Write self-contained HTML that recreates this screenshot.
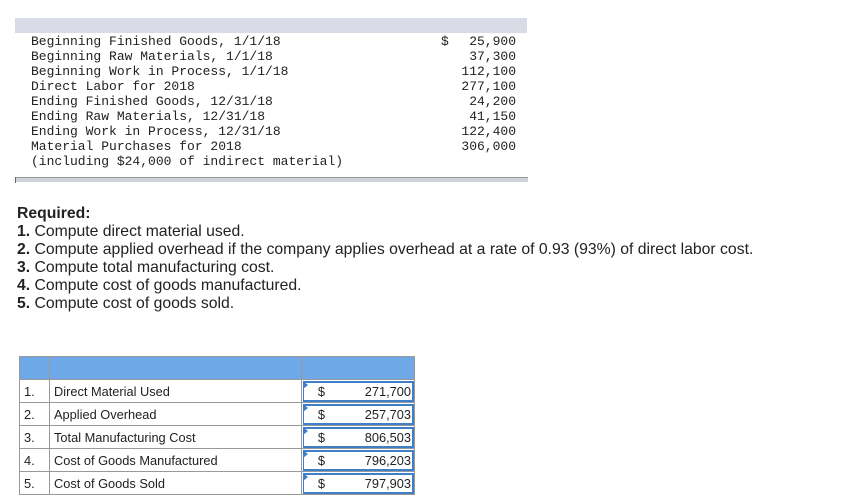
<!DOCTYPE html>
<html><head><style>
body{margin:0;width:844px;height:497px;background:#fff;position:relative;overflow:hidden}
.mono{font-family:"Liberation Mono",monospace;font-size:13px;color:#222;position:absolute;white-space:pre;line-height:15px}
.req{position:absolute;left:17px;top:205px;font-family:"Liberation Sans",sans-serif;font-size:15.75px;line-height:18px;color:#222}
table{position:absolute;left:19px;top:356px;border-collapse:collapse;table-layout:fixed;width:395px;font-family:"Liberation Sans",sans-serif;font-size:12.8px;color:#222}
td{border:1px solid #999;height:23px;padding:0 0 0 4px;box-sizing:border-box}
th{background:#6fa8e6;border:1px solid #999;height:23px;padding:0;box-sizing:border-box}
.v{padding:0;position:relative}
.v div{position:absolute;left:1px;top:1px;right:0;bottom:0;border:2px solid #3f7fc8;border-left:1px solid #3f7fc8;display:flex;align-items:center}
.v span.d{width:21px;text-align:right}
.v span.n{flex:1;text-align:right;padding-right:1px}
.flag{position:absolute;left:-1px;top:-2px;width:0;height:0;border-top:4px solid transparent;border-bottom:4px solid transparent;border-left:5px solid #3f7fc8}
</style></head><body>
<div style="position:absolute;left:15px;top:18px;width:512px;height:15px;background:#d9dbe6"></div>
<div class="mono" style="left:31px;top:34px">Beginning Finished Goods, 1/1/18
Beginning Raw Materials, 1/1/18
Beginning Work in Process, 1/1/18
Direct Labor for 2018
Ending Finished Goods, 12/31/18
Ending Raw Materials, 12/31/18
Ending Work in Process, 12/31/18
Material Purchases for 2018
(including $24,000 of indirect material)</div>
<div class="mono" style="left:441px;top:34px">$</div>
<div class="mono" style="left:430px;top:34px;width:86px;text-align:right">25,900
37,300
112,100
277,100
24,200
41,150
122,400
306,000</div>
<div style="position:absolute;left:15px;top:177px;width:513px;height:4px;background:#d0d2da;border-top:1px solid #999"></div>
<div style="position:absolute;left:15px;top:177px;width:1px;height:6px;background:#666"></div>
<div class="req"><b>Required:</b><br><b>1.</b> Compute direct material used.<br><b>2.</b> Compute applied overhead if the company applies overhead at a rate of 0.93 (93%) of direct labor cost.<br><b>3.</b> Compute total manufacturing cost.<br><b>4.</b> Compute cost of goods manufactured.<br><b>5.</b> Compute cost of goods sold.</div>
<table>
<colgroup><col style="width:30px"><col style="width:252px"><col style="width:113px"></colgroup>
<tr><th></th><th></th><th></th></tr>
<tr><td>1.</td><td>Direct Material Used</td><td class="v"><div><i class="flag"></i><span class="d">$</span><span class="n">271,700</span></div></td></tr>
<tr><td>2.</td><td>Applied Overhead</td><td class="v"><div><i class="flag"></i><span class="d">$</span><span class="n">257,703</span></div></td></tr>
<tr><td>3.</td><td>Total Manufacturing Cost</td><td class="v"><div><i class="flag"></i><span class="d">$</span><span class="n">806,503</span></div></td></tr>
<tr><td>4.</td><td>Cost of Goods Manufactured</td><td class="v"><div><i class="flag"></i><span class="d">$</span><span class="n">796,203</span></div></td></tr>
<tr><td>5.</td><td>Cost of Goods Sold</td><td class="v"><div><i class="flag"></i><span class="d">$</span><span class="n">797,903</span></div></td></tr>
</table>
</body></html>
